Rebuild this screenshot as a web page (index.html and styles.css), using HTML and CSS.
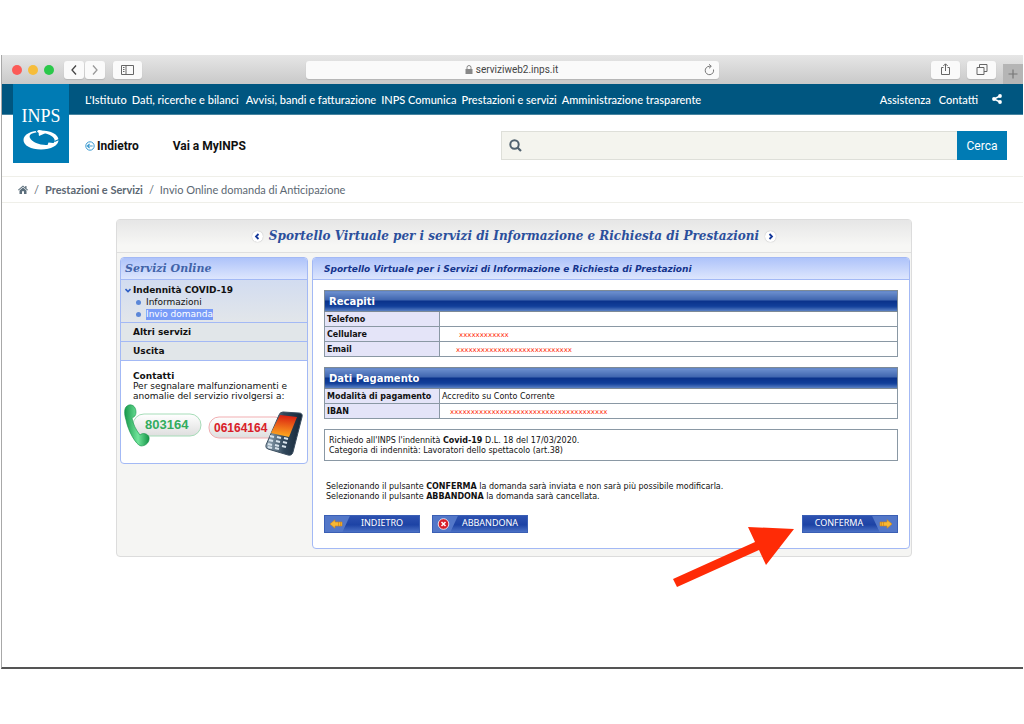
FILE: index.html
```html
<!DOCTYPE html>
<html lang="it">
<head>
<meta charset="utf-8">
<title>INPS - Sportello Virtuale</title>
<link rel="stylesheet" href="styles.css">
</head>
<body>
<div class="window">
  <div class="toolbar">
    <div class="tools">
      <span class="light red"></span><span class="light yellow"></span><span class="light green"></span>
      <div class="history">
        <button class="tool" aria-label="Pagina precedente"><svg width="8" height="12" viewBox="0 0 8 12"><path d="M6 1.5 2 6l4 4.500" fill="none" stroke="#444" stroke-width="1.300"/></svg></button>
        <button class="tool" aria-label="Pagina successiva"><svg width="8" height="12" viewBox="0 0 8 12"><path d="M2 1.500 6 6l-4 4.500" fill="none" stroke="#999" stroke-width="1.300"/></svg></button>
      </div>
      <button class="tool wide" aria-label="Barra laterale"><svg width="13" height="10" viewBox="0 0 13 10"><path d="M.5.500h12v9H.500zM5 .500v9M2 2.500h1.500M2 4.500h1.500M2 6.500h1.500" fill="none" stroke="#666"/></svg></button>
    </div>
    <div class="address">
      <svg width="8" height="9" viewBox="0 0 8 9"><path d="M.500 4h7v5h-7z" fill="#888"/><path d="M2 4.500V2.500a2 2 0 0 1 4 0v2" fill="none" stroke="#888"/></svg>
      <span>serviziweb2.inps.it</span>
      <button class="reload" aria-label="Ricarica"><svg width="11" height="12" viewBox="0 0 11 12"><path d="M9.500 5.500a4.200 4.200 0 1 1-4-3.200h1.300M5 .300l2.300 2L5 4.300" fill="none" stroke="#777"/></svg></button>
    </div>
    <div class="tools end">
      <button class="tool wide" aria-label="Condividi"><svg width="11" height="13" viewBox="0 0 11 13"><path d="M3.500 4.500h-2v7h8v-7h-2M5.500 8V1M3.300 3l2.200-2.200L7.700 3" fill="none" stroke="#666"/></svg></button>
      <button class="tool wide" aria-label="Pannelli"><svg width="12" height="11" viewBox="0 0 12 11"><path d="M1 3.500h7v7H1zM3.500 3.500v-3H11v7H8" fill="none" stroke="#666"/></svg></button>
      <button class="newtab" aria-label="Nuovo pannello"><svg width="10" height="10" viewBox="0 0 10 10"><path d="M5 .5v9M.5 5h9" stroke="#777" stroke-width="1.200"/></svg></button>
    </div>
  </div>

  <header class="site">
    <a class="logo" href="#" aria-label="INPS">
      <span>INPS</span>
      <svg width="38" height="20" viewBox="0 0 38 20"><path fill-rule="evenodd" d="M19 .5C29 .5 36.500 4.500 36.500 10S29 19.500 19 19.500 1.500 15.500 1.500 10 9 .5 19 .5zM18 2.500C10 2 6.500 4.500 8 8c2 4 9 7 16 7 6 0 9.500-2 8.500-5.500C31 5.500 25 3 18 2.500z" fill="#fff"/><path d="m16-.5 9 3-8 3.500zM24 19l2.500-6.500 9 1z" fill="#fff"/><path d="M14 .5 16 4M37 9.500l-4.500 2" stroke="#007bb4" stroke-width="1.200"/></svg>
    </a>
    <nav class="topnav">
      <a href="#">L'Istituto</a><a class="spaced" href="#">Dati, ricerche e bilanci</a><a href="#">Avvisi, bandi e fatturazione</a><a href="#">INPS Comunica</a><a href="#">Prestazioni e servizi</a><a href="#">Amministrazione trasparente</a>
      <a class="push" href="#">Assistenza</a><a href="#">Contatti</a>
      <a class="share" href="#" aria-label="Condividi"><svg width="10" height="10" viewBox="0 0 10 10"><path d="M8 2 2 5l6 3" fill="none" stroke="#fff" stroke-width="1.500"/><circle cx="8" cy="2" r="1.900" fill="#fff"/><circle cx="2" cy="5" r="1.900" fill="#fff"/><circle cx="8" cy="8" r="1.900" fill="#fff"/></svg></a>
    </nav>
    <div class="subbar">
      <a href="#"><svg width="10" height="10" viewBox="0 0 10 10"><circle cx="5" cy="5" r="4.200" fill="none" stroke="#3a9ad0"/><path d="M2.300 5h5.400M4.600 2.800 2.400 5l2.200 2.200" fill="none" stroke="#3a9ad0" stroke-width="1.200"/></svg> Indietro</a>
      <a href="#">Vai a MyINPS</a>
      <form class="search">
        <label for="q" aria-label="Cerca nel sito"><svg width="13" height="13" viewBox="0 0 13 13"><circle cx="5.500" cy="5.500" r="4.200" fill="none" stroke="#51626f" stroke-width="2"/><path d="m8.500 8.500 3.500 3.500" stroke="#51626f" stroke-width="2.200"/></svg></label>
        <input id="q" type="text">
        <button type="button">Cerca</button>
      </form>
    </div>
  </header>

  <nav class="crumbs">
    <a href="#" aria-label="Home"><svg width="10" height="9" viewBox="0 0 10 9"><path d="M5 .5 0 4.800l.6.6L5 1.700l4.400 3.700.6-.6-1.500-1.300V1H7.200v1.400z" fill="#5c6f7c"/><path d="M5 2.500 1.500 5.400V9H4V6.300h2V9h2.500V5.400z" fill="#5c6f7c"/></svg></a>
    <span>/</span><a href="#"><b>Prestazioni e Servizi</b></a><span>/</span><span>Invio Online domanda di Anticipazione</span>
  </nav>

  <main class="page">
  <div class="desk">
    <div class="desk-head">
      <span class="knob"><svg width="6" height="7" viewBox="0 0 6 7"><path d="M4.500 1 2 3.500 4.500 6" fill="none" stroke="#14389a" stroke-width="1.800"/></svg></span>
      <h1>Sportello Virtuale per i servizi di Informazione e Richiesta di Prestazioni</h1>
      <span class="knob"><svg width="6" height="7" viewBox="0 0 6 7"><path d="M1.500 1 4 3.500 1.500 6" fill="none" stroke="#14389a" stroke-width="1.800"/></svg></span>
    </div>
    <div class="columns">
      <aside class="box side">
        <h2>Servizi Online</h2>
        <div class="group open">
          <a href="#" class="top"><svg width="6" height="5" viewBox="0 0 6 5"><path d="M.500 1 3 3.500 5.500 1" fill="none" stroke="#2f5fc4" stroke-width="1.600"/></svg>Indennità COVID-19</a>
          <ul>
            <li><a href="#">Informazioni</a></li>
            <li><a class="current" href="#">Invio domanda</a></li>
          </ul>
        </div>
        <a class="group" href="#">Altri servizi</a>
        <a class="group" href="#">Uscita</a>
        <div class="contact">
          <b>Contatti</b>
          <p>Per segnalare malfunzionamenti e anomalie del servizio rivolgersi a:</p>
        </div>
        <svg class="phones" viewBox="0 0 184 52" role="img" aria-label="Numeri 803164 e 06164164">
          <defs>
            <linearGradient id="pill" x2="0" y2="1"><stop offset="0" stop-color="#fff"/><stop offset="1" stop-color="#dedede"/></linearGradient>
            <linearGradient id="screen" x1=".5" x2=".4" y2="1"><stop offset="0" stop-color="#d91d11"/><stop offset="1" stop-color="#ffae20"/></linearGradient>
            <linearGradient id="shell"><stop offset="0" stop-color="#9db0be"/><stop offset=".5" stop-color="#30475b"/><stop offset="1" stop-color="#152536"/></linearGradient>
            <linearGradient id="receiver"><stop offset="0" stop-color="#18994b"/><stop offset=".55" stop-color="#71e49b"/><stop offset="1" stop-color="#129345"/></linearGradient>
          </defs>
          <rect x="10" y="10" width="68" height="22" rx="11" fill="url(#pill)" stroke="#a6dcb8"/>
          <path d="M4 2c4-3 9 0 9 6 0 4-2 5-4 6 1 6 4 12 8 17 3-3 8-1 9 2 1 5-3 9-8 9-5-1-13-15-15-26C1 10 1 4 4 2z" fill="url(#receiver)" stroke="#15924a" stroke-width=".6"/>
          <text class="green-number" x="22" y="25">803164</text>
          <rect x="86" y="13" width="76" height="21" rx="10" fill="url(#pill)" stroke="#f0adb0"/>
          <text class="red-number" x="91" y="28">06164164</text>
          <path d="M156 11q1-3 4-3l16 1q4 0 3 4l-9 35q-1 4-5 3l-20-6q-3-1-2-4z" fill="url(#shell)" stroke="#3c4f60"/>
          <path d="m157 11 17 2-8 20-18-4z" fill="url(#screen)"/>
          <path d="m147 32 4 1m3 0 4 1m3 0 4 1m-19 1 4 1m3 0 4 1m3 0 4 1m-19 1 4 1m3 0 4 1m3 0 4 1m-18 0 4 1m3 0 4 1" stroke="#d7e3ec" stroke-width="2"/>
        </svg>
      </aside>

      <section class="box content">
        <h2>Sportello Virtuale per i Servizi di Informazione e Richiesta di Prestazioni</h2>
        <div class="inner">
          <table>
            <colgroup><col class="label-col"><col></colgroup>
            <thead><tr><th colspan="2">Recapiti</th></tr></thead>
            <tbody>
              <tr><th scope="row">Telefono</th><td></td></tr>
              <tr><th scope="row">Cellulare</th><td class="masked in3">xxxxxxxxxxxx</td></tr>
              <tr><th scope="row">Email</th><td class="masked in2">xxxxxxxxxxxxxxxxxxxxxxxxxxxx</td></tr>
            </tbody>
          </table>
          <table>
            <colgroup><col class="label-col"><col></colgroup>
            <thead><tr><th colspan="2">Dati Pagamento</th></tr></thead>
            <tbody>
              <tr><th scope="row">Modalità di pagamento</th><td>Accredito su Conto Corrente</td></tr>
              <tr><th scope="row">IBAN</th><td class="masked in1">xxxxxxxxxxxxxxxxxxxxxxxxxxxxxxxxxxxxxx</td></tr>
            </tbody>
          </table>
          <p class="request">Richiedo all'INPS l'indennità <b>Covid-19</b> D.L. 18 del 17/03/2020.<br>Categoria di indennità: Lavoratori dello spettacolo (art.38)</p>
          <p class="hint">Selezionando il pulsante <b>CONFERMA</b> la domanda sarà inviata e non sarà più possibile modificarla.<br>Selezionando il pulsante <b>ABBANDONA</b> la domanda sarà cancellata.</p>
          <div class="actions">
            <button class="action"><svg width="14" height="10" viewBox="0 0 14 10"><path d="M1 5 6 .700V3h7v4H6v2.300z" fill="#f7b733" stroke="#cf8418" stroke-width=".6"/><path d="M9.500 3v4M11.500 3v4" stroke="#cf8418" stroke-width=".7"/></svg><span>INDIETRO</span></button>
            <button class="action"><svg width="14" height="12" viewBox="0 0 14 12"><circle cx="6.500" cy="6" r="5.300" fill="#d81f2a" stroke="#fff" stroke-width=".8"/><path d="m4.500 4 4 4m0-4-4 4" stroke="#fff" stroke-width="1.500"/></svg><span>ABBANDONA</span></button>
            <button class="action confirm"><span>CONFERMA</span><svg width="14" height="10" viewBox="0 0 14 10"><path d="M13 5 8 .700V3H1v4h7v2.300z" fill="#f7b733" stroke="#cf8418" stroke-width=".6"/><path d="M4.500 3v4M2.500 3v4" stroke="#cf8418" stroke-width=".7"/></svg></button>
          </div>
        </div>
      </section>
    </div>
    <svg class="pointer" width="122" height="62" viewBox="0 0 122 62"><path d="M121 3 75 1l7 15L0 53l4 8 82-37 7 15z" fill="#ff2b06"/></svg>
  </div>
  </main>
</div>
</body>
</html>
```

FILE: styles.css
```css
* { box-sizing: border-box; }
body { margin: 0; padding: 55px 1px 0; background: #fff; font-family: "DejaVu Sans", Verdana, sans-serif; font-size: 9px; color: #111; }
h1, h2, p, ul { margin: 0; padding: 0; }
ul { list-style: none; }
a { color: inherit; text-decoration: none; }
button { border: 0; padding: 0; font: inherit; }
svg { flex: none; }

.window { min-height: calc(100vh - 110px); border-left: 1px solid #a8a8a8; border-bottom: 2px solid #555; }

/* browser toolbar */
.toolbar { display: grid; grid-template-columns: 1fr minmax(0, 413px) 1fr; align-items: center; height: 29px; background: linear-gradient(#e6e6e6, #c9c9c9); }
.tools { display: flex; align-items: center; padding-left: 10px; }
.light { width: 10px; height: 10px; margin-right: 6px; border-radius: 50%; }
.red { background: #fc5b57; }
.yellow { background: #f6bd3b; }
.green { background: #2ac84a; }
.history { display: flex; gap: 1px; margin: 0 8px 0 4px; }
.tool { display: grid; place-items: center; width: 20px; height: 18px; border-radius: 3px; background: #fafafa; box-shadow: 0 1px 1px #b5b5b5; }
.tool.wide { width: 29px; }
.address { display: flex; align-items: center; justify-content: center; gap: 3px; height: 18px; padding-left: 16px; border-radius: 3px; background: #fafafa; box-shadow: 0 1px 1px #b5b5b5; color: #444; font: 10px Roboto, sans-serif; }
.address span { margin-right: auto; }
.address > svg { margin-left: auto; }
.reload { height: 12px; margin-right: 4px; background: none; }
.end { align-self: stretch; justify-content: flex-end; gap: 7px; }
.newtab { align-self: flex-end; display: grid; place-items: center; width: 20px; height: 20px; background: #b5b5b5; }

/* site header */
.site { position: relative; font-family: Lato, sans-serif; border-bottom: 1px solid #efefe9; }
.logo { position: absolute; top: 0; left: 11px; display: flex; flex-direction: column; align-items: center; width: 56px; height: 79px; padding-top: 18px; background: #007bb4; color: #fff; }
.logo span { font: 18px/28px "Liberation Serif", serif; }
.topnav { display: flex; align-items: center; gap: 5px; height: 31px; padding: 0 21px 0 83px; background: #005680; border-bottom: 1px solid #4784a0; color: #fff; font-size: 11px; font-weight: 500; white-space: nowrap; }
.spaced { margin-right: 2px; }
.push { margin: 0 3px 0 auto; }
.share { display: flex; margin-left: 9px; }
.subbar { display: flex; align-items: center; gap: 34px; height: 61px; padding: 0 16px 0 83px; font: bold 12px Roboto, sans-serif; white-space: nowrap; }
.subbar > a { display: flex; align-items: center; gap: 2px; }
.search { display: flex; flex: 0 1 506px; height: 29px; margin-left: auto; }
.search label { display: grid; place-items: center; width: 28px; border: 1px solid #dedfd9; border-right: 0; background: #f4f4ee; }
.search input { flex: 1; min-width: 0; border: 1px solid #dedfd9; border-width: 1px 0; background: #f4f4ee; outline: 0; }
.search button { width: 50px; background: #007bb4; color: #fff; font: 12px Roboto, sans-serif; }
.crumbs { display: flex; align-items: center; gap: 6px; height: 26px; padding-left: 16px; border-bottom: 1px solid #efefe9; color: #5c6873; font: 11px Lato, sans-serif; }
.crumbs a { display: flex; }

/* virtual desk */
.page { padding: 16px 0 0 3px; }
.desk { position: relative; max-width: 796px; margin: 0 auto; padding-bottom: 7px; border: 1px solid #dcdcdc; border-radius: 4px; background: #f5f5f3; }
.desk-head { display: flex; align-items: center; justify-content: center; gap: 6px; height: 33px; border-bottom: 1px solid #dfdfdf; background: linear-gradient(#e6e6e6, #f7f7f5 80%); }
.desk-head h1 { color: #2b4f9c; font: italic bold 12px "DejaVu Serif", Georgia, serif; white-space: nowrap; }
.knob { display: grid; place-items: center; width: 11px; height: 11px; border-radius: 50%; background: #fff; box-shadow: 0 0 1px #999; }
.columns { display: flex; align-items: flex-start; gap: 4px; padding: 4px 1px 0 3px; }
.box { border: 1px solid #a3b9f5; border-radius: 4px; background: #fff; overflow: hidden; }
.box h2 { height: 22px; border-bottom: 1px solid #a3b9f5; background: linear-gradient(#aec3fa, #dde6fd); }
.side { flex: 0 0 188px; }
.side h2 { padding-left: 4px; color: #4163a9; font: italic bold 11px/22px "DejaVu Serif", Georgia, serif; }
.group { display: block; height: 19px; padding-left: 12px; border-bottom: 1px solid #a3b9f5; background: #e1e6e9; font-weight: 700; line-height: 19px; }
.group.open { height: 43px; padding: 5px 0 0 4px; background: linear-gradient(#d2dcf0, #e2e6ea); line-height: 11px; }
.top { display: flex; align-items: center; gap: 2px; }
.group li { display: flex; align-items: center; gap: 5px; height: 12px; padding-left: 11px; font-weight: 400; }
.group li::before { content: ""; width: 5px; height: 5px; border-radius: 50%; background: #5b87d8; }
.current { background: #789bf8; color: #fff; }
.contact { padding: 10px 12px 0; line-height: 10px; }
.contact b { display: block; }
.phones { display: block; width: 184px; height: 52px; margin: 3px 0 7px 2px; }
.green-number { fill: #32ac5e; font: bold 13px "Liberation Sans", sans-serif; }
.red-number { fill: #d92027; font: bold 12px "Liberation Sans", sans-serif; }
.content { flex: 1; min-width: 0; font-size: 8px; }
.content h2 { padding-left: 11px; color: #14348c; font: italic bold 9px/22px "DejaVu Sans", sans-serif; }
.inner { padding: 10px 11px 15px; }
table { width: 100%; margin-bottom: 10px; border-collapse: collapse; table-layout: fixed; }
.label-col { width: 115px; }
thead th { height: 21px; padding: 0 4px; border: 1px solid #7d8a96; background: linear-gradient(#6d90cf, #3d63ad 45%, #0a318a 46%, #12409a 75%, #6388c9); color: #fff; font-size: 10px; text-align: left; }
tbody th, td { height: 15px; padding: 2px 2px 0; border: 1px solid #8a98a4; text-align: left; line-height: 12px; }
tbody th { background: #e4e4f8; }
.masked { color: #ff2b06; font-size: 7px; }
.in1 { padding-left: 10px; }
.in2 { padding-left: 16px; }
.in3 { padding-left: 19px; }
.request { padding: 6px 4px 4px; border: 1px solid #8a98a4; line-height: 10px; }
.hint { padding: 21px 2px 13px; line-height: 10px; }
.actions { display: flex; gap: 12px; }
.action { display: flex; align-items: center; width: 96px; height: 18px; padding: 0 4px; border: 1px solid #3a5fb5; background: linear-gradient(115deg, #5377c8 24%, #5377c800 25%), linear-gradient(#2d51b0, #1d43a5 55%, #4a70c5); color: #fff; font: 9px/14px "Noto Sans", sans-serif; }
.action span { flex: 1; padding: 0 0 2px 6px; text-align: center; }
.confirm { margin-left: auto; background: linear-gradient(65deg, #5377c800 75%, #5377c8 76%), linear-gradient(#2d51b0, #1d43a5 55%, #4a70c5); }
.confirm span { padding: 0 8px 2px 0; }
.pointer { position: absolute; right: 116px; bottom: -32px; }
```
